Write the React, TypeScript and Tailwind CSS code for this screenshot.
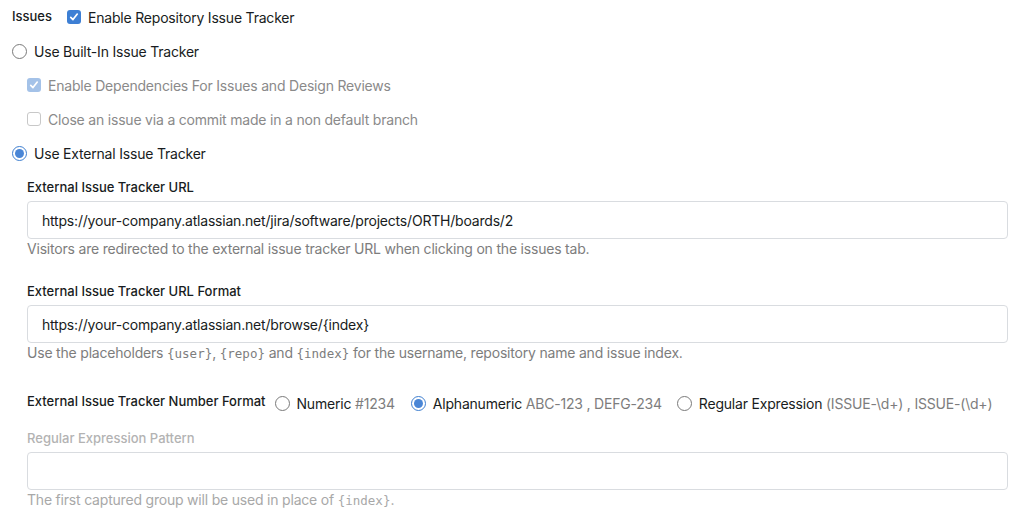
import React from "react";

const Radio = ({ checked = false }: { checked?: boolean }) =>
  checked ? (
    <span className="flex size-[15px] shrink-0 items-center justify-center rounded-full border border-[#3f7fd0] bg-white">
      <span className="size-[9px] rounded-full bg-[#4a86d6]" />
    </span>
  ) : (
    <span className="size-[15px] shrink-0 rounded-full border border-[#7a7a7a] bg-white" />
  );

const Check = ({ checked = false, disabled = false }: { checked?: boolean; disabled?: boolean }) => {
  if (!checked)
    return (
      <span
        className={`size-[14px] shrink-0 rounded-[3px] border bg-white ${
          disabled ? "border-[#c8c8c8]" : "border-[#7a7a7a]"
        }`}
      />
    );
  return (
    <span
      className={`flex size-[14px] shrink-0 items-center justify-center rounded-[3px] ${
        disabled ? "bg-[#a4c2e8]" : "bg-[#3d7fd4]"
      }`}
    >
      <svg viewBox="0 0 14 14" className="size-[12px]" fill="none" stroke="white" strokeWidth="2" strokeLinecap="round" strokeLinejoin="round">
        <path d="M3.2 7.4 5.8 10 10.8 3.6" />
      </svg>
    </span>
  );
};

const Code = ({ children }: { children: React.ReactNode }) => (
  <code className="font-['DejaVu_Sans_Mono',monospace] text-[12.5px] tracking-normal">{children}</code>
);

const Field = ({
  label,
  value,
  help,
  disabled = false,
}: {
  label: string;
  value?: string;
  help: React.ReactNode;
  disabled?: boolean;
}) => (
  <div className="flex flex-col">
    <div
      className={`h-5 text-[13px] leading-5 font-medium tracking-normal ${
        disabled ? "text-[#b3b3b3]" : "text-[#181c21]"
      }`}
    >
      {label}
    </div>
    <div className="mt-1 flex h-[38px] items-center rounded-[4px] border border-[#d9dce0] bg-white px-[14px] text-[14px] text-[#181c21]">
      {value}
    </div>
    <div className={`h-5 text-[14px] leading-5 ${disabled ? "text-[#a8a8a8]" : "text-[#7d7d7d]"}`}>{help}</div>
  </div>
);

export default function App() {
  return (
    <div className="min-h-screen bg-white pl-3 pr-[15px] font-['Inter',sans-serif] text-[14px] tracking-[-0.2px] text-[#181c21]">
      <div className="flex h-[34px] items-center">
        <span className="text-[13px] font-medium tracking-normal">Issues</span>
        <span className="ml-[15px]">
          <Check checked />
        </span>
        <span className="ml-[7px]">Enable Repository Issue Tracker</span>
      </div>

      <div className="flex h-[34px] items-center gap-[7px]">
        <Radio />
        <span>Use Built-In Issue Tracker</span>
      </div>

      <div className="ml-[15px] flex h-[34px] items-center gap-[7px] text-[#8a8a8a]">
        <Check checked disabled />
        <span>Enable Dependencies For Issues and Design Reviews</span>
      </div>

      <div className="ml-[15px] flex h-[34px] items-center gap-[7px] text-[#8a8a8a]">
        <Check disabled />
        <span>Close an issue via a commit made in a non default branch</span>
      </div>

      <div className="flex h-[34px] items-center gap-[7px]">
        <Radio checked />
        <span>Use External Issue Tracker</span>
      </div>

      <div className="ml-[15px] flex flex-col">
        <div className="mt-[7px]">
          <Field
            label="External Issue Tracker URL"
            value="https://your-company.atlassian.net/jira/software/projects/ORTH/boards/2"
            help="Visitors are redirected to the external issue tracker URL when clicking on the issues tab."
          />
        </div>

        <div className="mt-[22px]">
          <Field
            label="External Issue Tracker URL Format"
            value="https://your-company.atlassian.net/browse/{index}"
            help={
              <>
                Use the placeholders <Code>{"{user}"}</Code>, <Code>{"{repo}"}</Code> and <Code>{"{index}"}</Code> for
                the username, repository name and issue index.
              </>
            }
          />
        </div>

        <div className="mt-[30px] flex h-5 items-center whitespace-nowrap">
          <span className="-mt-[2px] text-[13px] font-medium tracking-normal">External Issue Tracker Number Format</span>
          <span className="ml-[9px] flex items-center gap-[7px]">
            <Radio />
            <span>
              Numeric <span className="text-[#7d7d7d]">#1234</span>
            </span>
          </span>
          <span className="ml-4 flex items-center gap-[7px]">
            <Radio checked />
            <span>
              Alphanumeric <span className="text-[#7d7d7d]">ABC-123 , DEFG-234</span>
            </span>
          </span>
          <span className="ml-[15px] flex items-center gap-[7px]">
            <Radio />
            <span>
              Regular Expression <span className="text-[#7d7d7d]">(ISSUE-\d+) , ISSUE-(\d+)</span>
            </span>
          </span>
        </div>

        <div className="mt-[15px]">
          <Field
            disabled
            label="Regular Expression Pattern"
            help={
              <>
                The first captured group will be used in place of <Code>{"{index}"}</Code>.
              </>
            }
          />
        </div>
      </div>
    </div>
  );
}
